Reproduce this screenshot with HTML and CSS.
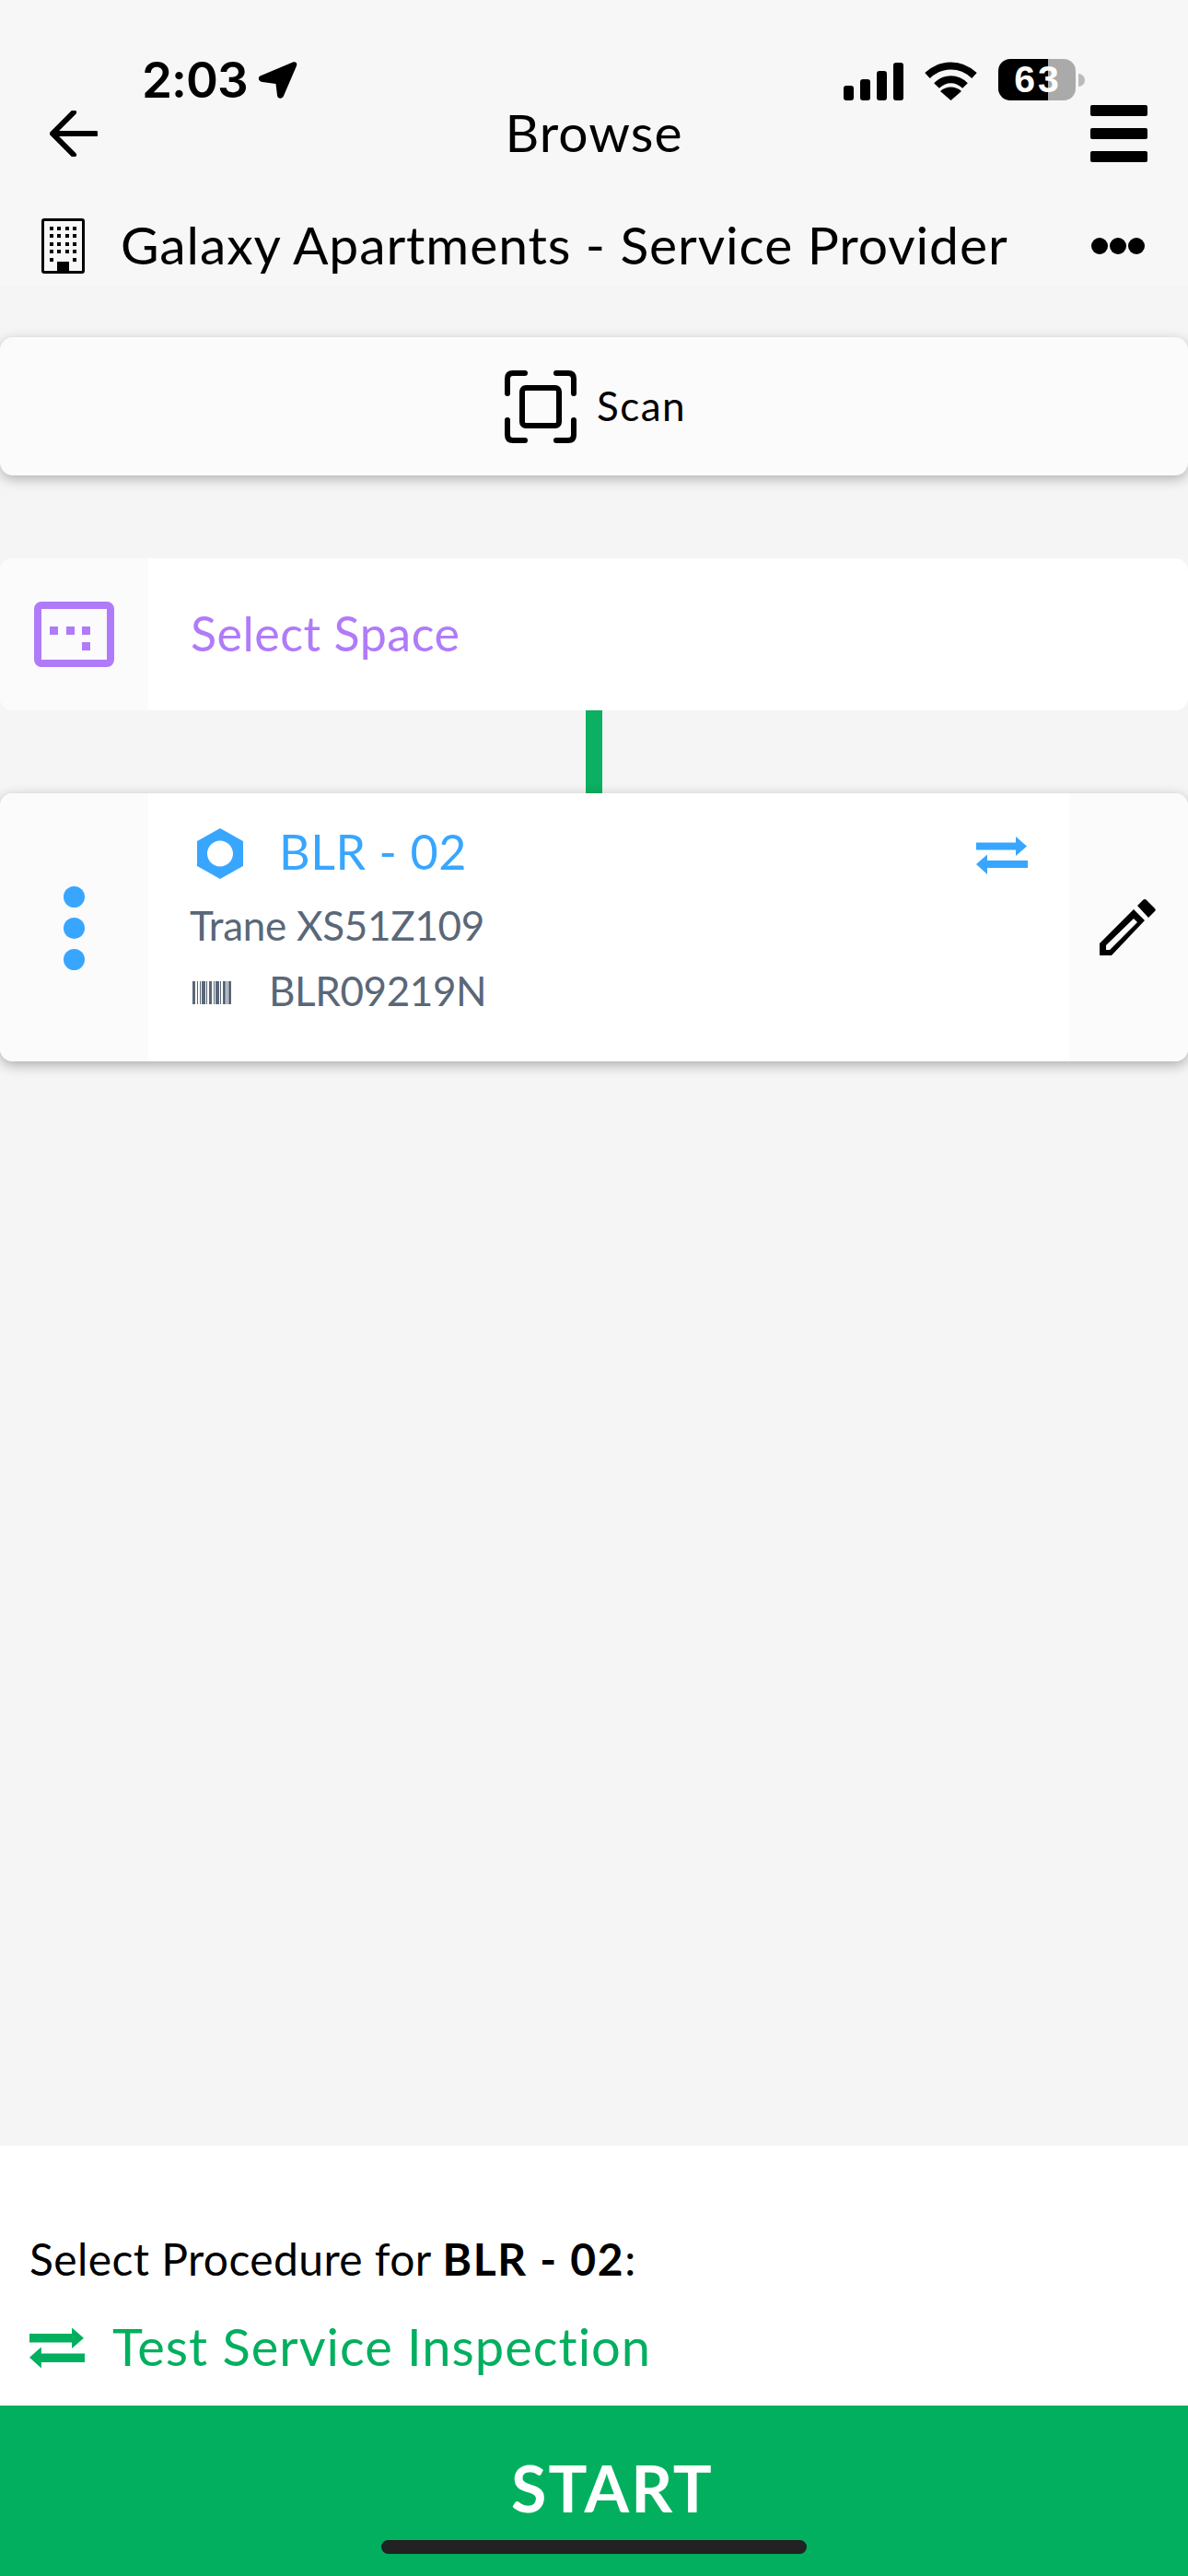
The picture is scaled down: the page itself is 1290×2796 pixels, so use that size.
FILE: index.html
```html
<!DOCTYPE html>
<html lang="en">
<head>
<meta charset="utf-8">
<title>Browse</title>
<link rel="stylesheet" href="styles.css">
</head>
<body>
<div class="app">
  <div class="status">
    <div class="status-left">
      <span class="time">2:03</span>
      <svg class="loc" viewBox="0 0 42 40"><path d="M37 0.500C40.500 -0.500 42 1.500 41 4.500L27 37C25.500 41 20.500 40.500 20 36.500L18.500 24L4 22C-1 21 -1.500 16.500 2.500 15Z"/></svg>
    </div>
    <div class="status-right">
      <svg class="signal" viewBox="0 0 65 41"><rect x="0" y="25" width="11" height="16" rx="3"/><rect x="18" y="18" width="11" height="23" rx="3"/><rect x="36" y="9" width="11" height="32" rx="3"/><rect x="54" y="0" width="11" height="41" rx="3"/></svg>
      <svg class="wifi" viewBox="0 0 57 42"><path d="M3 15C18 1 39 1 54 15" fill="none" stroke="#000" stroke-width="8"/><path d="M13 26C22 17 35 17 44 26" fill="none" stroke="#000" stroke-width="8"/><path d="M17 32C23 26 34 26 40 32L28.500 42Z"/></svg>
      <div class="battery"><span>63</span></div>
      <span class="nub"></span>
    </div>
  </div>

  <header class="header">
    <div class="nav">
      <svg class="back" viewBox="0 0 52 50"><path d="M50 25H4M26 2L3 25L26 48" fill="none" stroke="#000" stroke-width="6" stroke-linecap="round" stroke-linejoin="round"/></svg>
      <h1 class="title">Browse</h1>
      <div class="burger"><i></i><i></i><i></i></div>
    </div>
    <div class="site">
      <svg class="building" viewBox="0 0 47 60"><rect x="1.500" y="1.500" width="44" height="57" rx="1.500" fill="none" stroke="#000" stroke-width="3"/><g><rect x="9" y="9" width="4" height="4"/><rect x="17" y="9" width="4" height="4"/><rect x="26" y="9" width="4" height="4"/><rect x="34" y="9" width="4" height="4"/><rect x="9" y="17" width="4" height="4"/><rect x="17" y="17" width="4" height="4"/><rect x="26" y="17" width="4" height="4"/><rect x="34" y="17" width="4" height="4"/><rect x="9" y="26" width="4" height="4"/><rect x="17" y="26" width="4" height="4"/><rect x="26" y="26" width="4" height="4"/><rect x="34" y="26" width="4" height="4"/><rect x="9" y="34" width="4" height="4"/><rect x="17" y="34" width="4" height="4"/><rect x="26" y="34" width="4" height="4"/><rect x="34" y="34" width="4" height="4"/><rect x="9" y="43" width="4" height="4"/><rect x="34" y="43" width="4" height="4"/><rect x="17" y="47" width="13" height="11"/></g></svg>
      <span class="site-name">Galaxy Apartments - Service Provider</span>
      <div class="more"><i></i><i></i><i></i></div>
    </div>
  </header>

  <main class="main">
    <div class="scan">
      <svg class="scan-icon" viewBox="0 0 78 79"><path d="M3 25V9Q3 3 9 3H22M56 3H69Q75 3 75 9V25M3 54V70Q3 76 9 76H22M56 76H69Q75 76 75 70V54" fill="none" stroke="#000" stroke-width="6" stroke-linecap="round"/><rect x="19" y="19" width="40" height="41" rx="4" fill="none" stroke="#000" stroke-width="6"/></svg>
      <span class="scan-text">Scan</span>
    </div>

    <div class="space">
      <div class="space-side">
        <svg class="space-icon" viewBox="0 0 87 71"><rect x="4" y="4" width="79" height="63" rx="4" fill="none" stroke="#b07bf9" stroke-width="8"/><rect x="17" y="27" width="9" height="9"/><rect x="35" y="27" width="9" height="9"/><rect x="52" y="27" width="9" height="9"/><rect x="52" y="44" width="9" height="9"/></svg>
      </div>
      <span class="space-text">Select Space</span>
    </div>

    <div class="connector"></div>

    <div class="asset">
      <div class="asset-side">
        <i></i><i></i><i></i>
      </div>
      <div class="asset-body">
        <div class="asset-title">
          <svg class="hex" viewBox="0 0 50 55"><path fill-rule="evenodd" d="M25 0L50 14V41L25 55L0 41V14ZM25 13.500C17 13.500 11 20 11 27.500C11 35 17 41.500 25 41.500C33 41.500 39 35 39 27.500C39 20 33 13.500 25 13.500Z"/></svg>
          <span class="asset-name">BLR - 02</span>
          <svg class="swap swap-blue" viewBox="0 0 56 41"><path d="M0 6.500H43V0L55 10.500L43 21V14.500H0ZM56 26H12V19.500L0 30L12 41V34H56Z"/></svg>
        </div>
        <div class="asset-model">Trane XS51Z109</div>
        <div class="asset-serial">
          <svg class="barcode" viewBox="0 0 42 25"><path d="M0 0h3v25H0zM5 0h1v25H5zM8 0h1v25H8zM10 0h4v25h-4zM15 0h1v25h-1zM18 0h3v25h-3zM23 0h1v25h-1zM25 0h4v25h-4zM30 0h1v25h-1zM33 0h3v25h-3zM37 0h1v25h-1zM39 0h3v25h-3z"/></svg>
          <span>BLR09219N</span>
        </div>
      </div>
      <div class="asset-edit">
        <svg class="pencil" viewBox="0 0 61 61"><path d="M47 1Q49 -1 51 1L60 10Q61.500 12 60 13L53 20L41 7Z"/><path fill-rule="evenodd" d="M37 11L49 23L13 61H0V48ZM37 21L7 50V55H11L41 25Z"/></svg>
      </div>
    </div>
  </main>

  <section class="procedure">
    <p class="proc-label">Select Procedure for <b>BLR - 02</b>:</p>
    <div class="proc-item">
      <svg class="swap swap-green" viewBox="0 0 56 41"><path d="M0 6H43V0L55 10.500L43 21V15H0ZM56 26H12V19.500L0 30L12 41V35H56Z"/></svg>
      <span>Test Service Inspection</span>
    </div>
  </section>

  <footer class="start">
    <span class="start-text">START</span>
    <span class="home-bar"></span>
  </footer>
</div>
</body>
</html>
```
FILE: styles.css
```css
* { box-sizing: border-box; }
html, body { margin: 0; padding: 0; }
body { font-family: "Lato", "Noto Sans", sans-serif; color: #000; background: #f5f5f5; }
.app { position: relative; width: 1290px; height: 2796px; display: flex; flex-direction: column; overflow: hidden; }

.status { position: absolute; top: 0; left: 0; right: 0; height: 115px; }
.status-left { position: absolute; left: 154px; top: 60px; display: flex; align-items: center; gap: 11px; height: 54px; }
.time { font-family: "Inter", sans-serif; font-weight: 600; font-size: 53px; line-height: 54px; letter-spacing: -1px; }
.loc { width: 44px; height: 40px; }
.status-right { position: absolute; left: 916px; top: 64px; display: flex; align-items: center; height: 45px; }
.signal { width: 65px; height: 41px; margin-top: 4px; }
.wifi { width: 57px; height: 42px; margin-left: 23px; margin-top: 2px; }
.battery { width: 84px; height: 45px; margin-left: 23px; border-radius: 13px; background: linear-gradient(90deg, #000 54px, #aaa 54px); display: flex; align-items: center; justify-content: center; }
.battery span { font-family: "Liberation Sans", sans-serif; font-weight: 700; font-size: 41px; line-height: 45px; letter-spacing: 3px; color: #fff; margin-left: 2px; }
.nub { width: 7px; height: 14px; margin-left: 3px; border-radius: 0 7px 7px 0; background: #bbb; }

.header { background: #f7f7f7; height: 310px; padding-top: 113px; flex: none; }
.nav { position: relative; height: 60px; display: flex; align-items: center; justify-content: space-between; padding: 0 44px 0 54px; }
.back { width: 52px; height: 50px; margin-top: 4px; }
.title { position: absolute; left: 0; right: 0; top: 0; margin: 0; text-align: center; font-weight: 400; font-size: 57px; line-height: 60px; letter-spacing: 1px; }
.burger { width: 62px; display: flex; flex-direction: column; gap: 13px; margin-top: 4px; }
.burger i { display: block; height: 12px; border-radius: 2px; background: #000; }
.site { display: flex; align-items: center; height: 60px; margin-top: 64px; padding: 0 47px 0 45px; }
.building { width: 47px; height: 60px; flex: none; }
.site-name { flex: 1; margin-left: 39px; font-size: 57px; line-height: 56px; height: 56px; align-self: flex-start; letter-spacing: .9px; white-space: nowrap; }
.more { display: flex; gap: 2px; }
.more i { display: block; width: 18px; height: 18px; border-radius: 50%; background: #000; }

.main { flex: 1; display: flex; flex-direction: column; padding-top: 56px; }
.scan { height: 150px; flex: none; background: #fbfbfb; border-radius: 14px; box-shadow: 0 4px 14px rgba(0,0,0,.28); display: flex; align-items: center; justify-content: center; gap: 22px; padding: 0 0 0 3px; }
.scan-icon { width: 78px; height: 79px; }
.scan-text { font-size: 44px; line-height: 48px; height: 50px; letter-spacing: 1.5px; }

.space { height: 165px; flex: none; margin-top: 90px; background: #fff; border-radius: 14px; display: flex; align-items: center; overflow: hidden; }
.space-side { width: 161px; height: 100%; background: #fbfbfb; display: flex; align-items: center; justify-content: center; }
.space-icon { width: 87px; height: 71px; fill: #b07bf9; }
.space-text { margin-left: 46px; font-size: 52px; letter-spacing: .5px; line-height: 56px; height: 60px; color: #b07bf9; }

.connector { width: 18px; height: 90px; flex: none; margin-left: 636px; background: #0bb062; }

.asset { height: 291px; flex: none; background: #fff; border-radius: 14px; box-shadow: 0 4px 14px rgba(0,0,0,.3); display: flex; overflow: hidden; position: relative; }
.asset-side { width: 161px; background: #fbfbfb; display: flex; flex-direction: column; align-items: center; justify-content: center; gap: 11px; flex: none; padding-top: 1px; }
.asset-side i { display: block; width: 23px; height: 23px; border-radius: 50%; background: #38a6ff; }
.asset-body { flex: 1; padding: 38px 45px 0 45px; }
.asset-title { display: flex; align-items: center; height: 55px; padding-left: 8px; }
.hex { width: 50px; height: 55px; fill: #38a6ff; flex: none; }
.asset-name { flex: 1; margin-left: 39px; font-size: 52px; line-height: 51px; height: 55px; letter-spacing: .6px; color: #38a6ff; }
.swap { width: 56px; height: 41px; flex: none; }
.swap-blue { fill: #38a6ff; margin-top: 3px; }
.swap-green { fill: #02af5f; width: 60px; height: 45px; margin-top: 2px; }
.asset-model { margin-top: 25px; font-size: 44px; line-height: 50px; letter-spacing: -.3px; color: #5a6778; }
.asset-serial { display: flex; align-items: center; margin-top: 21px; height: 50px; color: #5a6778; font-size: 44px; line-height: 50px; letter-spacing: -.4px; padding-left: 3px; }
.barcode { width: 42px; height: 25px; fill: #5a6778; flex: none; margin-top: 5px; }
.asset-serial span { margin-left: 41px; }
.asset-edit { width: 129px; background: #fbfbfb; display: flex; align-items: center; justify-content: center; flex: none; }
.pencil { width: 61px; height: 61px; margin-right: 3px; }

.procedure { height: 282px; flex: none; background: #fff; padding: 95px 0 0 32px; }
.proc-label { margin: 0; font-size: 48px; line-height: 56px; letter-spacing: .4px; }
.proc-label b { letter-spacing: 1.7px; }
.proc-item { display: flex; align-items: center; margin-top: 36px; height: 62px; color: #02af5f; font-size: 56px; letter-spacing: 1px; }
.proc-item span { margin-left: 30px; margin-bottom: 2px; }

.start { height: 185px; flex: none; background: #02af5f; display: flex; flex-direction: column; align-items: center; }
.start-text { margin-top: 49px; margin-left: 40px; font-size: 70px; line-height: 80px; letter-spacing: 2px; font-weight: 700; color: #fff; }
.home-bar { width: 462px; height: 15px; margin-top: 17px; border-radius: 8px; background: #222; }
```
